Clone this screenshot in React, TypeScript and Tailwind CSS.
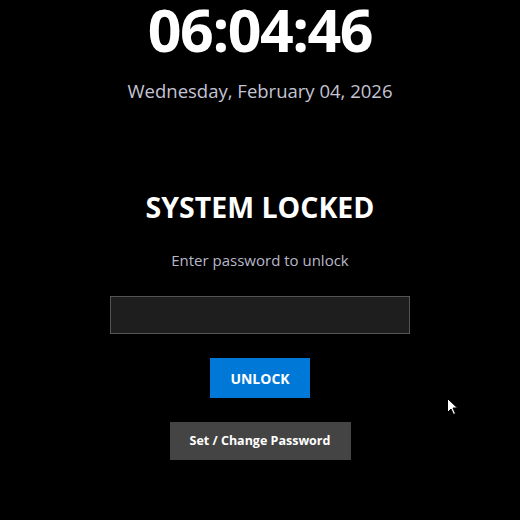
export default function App() {
  return (
    <div
      className="relative flex h-[520px] w-[520px] flex-col items-center overflow-hidden bg-black text-white"
      style={{ fontFamily: '"Open Sans", "Noto Sans", sans-serif' }}
    >
      <div className="text-[59px] font-bold leading-none tracking-tight">06:04:46</div>
      <div className="mt-[19px] text-[18.5px] leading-[26px] text-[#c4c4d4]">Wednesday, February 04, 2026</div>

      <h1 className="mt-[86px] text-[28.5px] font-bold leading-[34px]">SYSTEM LOCKED</h1>
      <p className="mt-[26px] text-[15px] leading-[20px] text-[#b8b8c8]">Enter password to unlock</p>

      <input
        type="password"
        className="mt-[26px] h-[38px] w-[300px] border border-[#555] bg-[#1e1e1e] px-3 text-white outline-none"
      />

      <button className="mt-[24px] h-[40px] w-[100px] bg-[#0078d7] text-[14px] font-bold text-white">
        UNLOCK
      </button>

      <button className="mt-[24px] h-[38px] w-[181px] bg-[#444] text-[12.5px] font-bold text-white">
        Set / Change Password
      </button>

      <svg className="absolute left-[447px] top-[398px]" width="12" height="18" viewBox="0 0 12 18">
        <path d="M0.5 0.5 L0.5 14.5 L4 11 L6.5 16.5 L8.5 15.5 L6 10 L10.5 10 Z" fill="#fff" stroke="#000" strokeWidth="1" />
      </svg>
    </div>
  )
}
